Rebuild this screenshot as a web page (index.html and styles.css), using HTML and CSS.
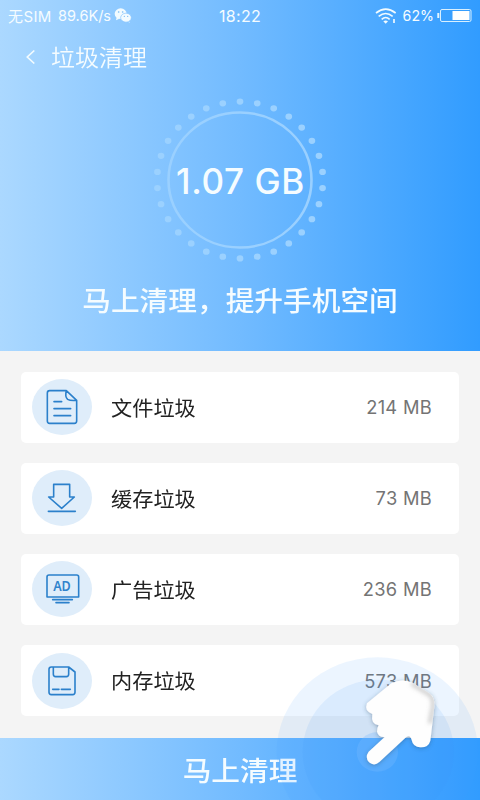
FILE: index.html
```html
<!DOCTYPE html>
<html lang="zh-CN">
<head>
<meta charset="utf-8">
<title>垃圾清理</title>
<link rel="stylesheet" href="styles.css">
</head>
<body>
<main class="screen">
  <section class="hero">
    <div class="status">
      <div class="status-left">
        <span class="carrier">无SIM</span><span class="speed">89.6K/s</span>
        <svg class="wechat" width="18" height="16" viewBox="0 0 54 48"><g fill="#f2fbff"><ellipse cx="20" cy="17" rx="18" ry="16"/><path d="M8 28l-2 9 10-5zM43 37l5 7-10-4z"/><ellipse cx="36" cy="29" rx="16" ry="13.5" stroke="#83c3ff" stroke-width="2"/></g><g fill="#76b9f5"><circle cx="14" cy="12" r="2.5"/><circle cx="26" cy="12" r="2.5"/><circle cx="31" cy="25" r="2"/><circle cx="41" cy="25" r="2"/></g></svg>
      </div>
      <span class="clock">18:22</span>
      <div class="status-right">
        <svg width="22" height="16" viewBox="0 0 66 48" fill="none" stroke="#f2fbff" stroke-width="4.8"><path d="M3 15Q32-8 62 15M11 25Q32 8 53 25M20 34Q32 23 44 34"/><path d="M25 40q7-5 14 0l-7 7z" fill="#f2fbff" stroke="none"/><path d="M57 33v12" stroke-width="5"/></svg>
        <span class="percent">62%</span>
        <svg class="battery" width="35" height="15" viewBox="0 0 35 15"><rect x="3.5" y="1.5" width="30.5" height="12" rx="1.5" fill="none" stroke="#d9f0ff"/><rect x="15.5" y="3" width="17" height="9" fill="#fff"/><path d="M1.3 5v5" stroke="#e4f5ff" stroke-width="2"/></svg>
      </div>
    </div>
    <header class="nav">
      <svg class="back" width="12" height="16" viewBox="0 0 12 16"><path d="M9.3 1.5 2.3 8l7 6.5" fill="none" stroke="#f2fbff" stroke-width="1.7"/></svg>
      <h1 class="title">垃圾清理</h1>
    </header>
    <div class="gauge">
      <svg class="ring" viewBox="0 0 180 180" preserveAspectRatio="none"><circle cx="90" cy="90" r="71.5" fill="none" stroke="#9ad0ff" stroke-width="2.6"/><circle cx="90" cy="90" r="83" fill="none" stroke="#9bd1ff" stroke-width="6.7" stroke-linecap="round" pathLength="30" stroke-dasharray="0 1" transform="rotate(-90 90 90)"/></svg>
      <span class="total">1.07 GB</span>
    </div>
    <p class="headline">马上清理，提升手机空间</p>
  </section>
  <section class="list">
    <article class="card">
      <span class="badge"><svg width="60" height="56" viewBox="0 0 180 168"><path d="M101 35H53q-7 0-7 7v84q0 7 7 7h74q7 0 7-7V64L103 35q-5 17 4 26 8 5 27 3M66 68h23M66 89h50M66 110h50"/></svg></span>
      <span class="name">文件垃圾</span><span class="size">214 MB</span>
    </article>
    <article class="card">
      <span class="badge"><svg width="60" height="56" viewBox="0 0 180 168"><path d="M65 43h48v38h14l-38 34-39-34h15zM49 124h81"/></svg></span>
      <span class="name">缓存垃圾</span><span class="size">73 MB</span>
    </article>
    <article class="card">
      <span class="badge"><svg width="60" height="56" viewBox="0 0 180 168"><path d="M45 108V48q0-6 6-6h83q6 0 6 6v60zM62 116h59M72 125h39"/><text x="90" y="89" text-anchor="middle" textLength="53" lengthAdjust="spacingAndGlyphs" class="ad">AD</text></svg></span>
      <span class="name">广告垃圾</span><span class="size">236 MB</span>
    </article>
    <article class="card">
      <span class="badge"><svg width="60" height="56" viewBox="0 0 180 168"><path d="M51 49q0-7 7-7h52l19 15v61q0 7-7 7H58q-7 0-7-7zM64 43v21q0 7 7 7h32q7 0 7-7V43M62 109h19M88 109h27"/></svg></span>
      <span class="name">内存垃圾</span><span class="size">573 MB</span>
    </article>
  </section>
  <footer class="action"><span class="action-text">马上清理</span></footer>
  <svg class="touch" width="210" height="160" viewBox="0 0 630 480">
    <defs>
      <filter id="shade" x="-20%" y="-20%" width="140%" height="140%"><feDropShadow dx="0" dy="3" stdDeviation="6" flood-color="#334c68" flood-opacity="0.42"/></filter>
      <filter id="soft" x="-50%" y="-20%" width="200%" height="140%"><feGaussianBlur stdDeviation="7"/></filter>
      <clipPath id="palm"><path d="M291 190L364 130Q393 114 426 127L478 160Q495 172 493 200L481 302Q475 323 451 322Q429 321 425 300Q421 283 409 291L328 366Q313 380 297 367Q284 352 296 335L344 291Q326 293 321 275Q321 264 326 256Q302 253 307 222Q282 213 291 190Z"/></clipPath>
    </defs>
    <ellipse cx="322" cy="336" rx="302" ry="284" fill="#429cff" fill-opacity="0.1"/>
    <ellipse cx="325" cy="336" rx="227" ry="217" fill="#3a96f5" fill-opacity="0.1"/>
    <ellipse cx="322" cy="336" rx="62" ry="59" fill="#7abaff" fill-opacity="0.32"/>
    <path filter="url(#shade)" fill="#fefefe" d="M291 190L364 130Q393 114 426 127L478 160Q495 172 493 200L481 302Q475 323 451 322Q429 321 425 300Q421 283 409 291L328 366Q313 380 297 367Q284 352 296 335L344 291Q326 293 321 275Q321 264 326 256Q302 253 307 222Q282 213 291 190Z"/>
    <g clip-path="url(#palm)"><path d="M424 130L482 166Q492 178 489 202L480 250" fill="none" stroke="#999" stroke-opacity="0.5" stroke-width="12" filter="url(#soft)"/></g>
  </svg>
</main>
</body>
</html>
```
FILE: styles.css
```css
* { box-sizing: border-box; }
body { margin: 0; font-family: Inter, "Noto Sans CJK SC", sans-serif; }
.screen { position: relative; width: 480px; height: 800px; overflow: hidden; background: #f4f4f4; display: flex; flex-direction: column; }
.hero, .action { background: linear-gradient(90deg, #abd8ff 0%, #72bbff 50%, #319cff 100%); color: #f5fcff; }
.hero { height: 351px; flex: none; display: flex; flex-direction: column; align-items: center; }
.status { width: 100%; height: 31px; padding: 0 8px; display: grid; grid-template-columns: 1fr auto 1fr; align-items: center; font-size: 14.5px; white-space: nowrap; }
.status-left, .status-right { display: flex; align-items: center; }
.status-right { justify-content: flex-end; }
.carrier { width: 50px; font-size: 15px; letter-spacing: 0.4px; }
.speed { width: 56px; }
.clock { font-size: 16px; letter-spacing: 0.3px; }
.percent { margin: 0 3px 0 6px; font-size: 14.2px; }
.nav { width: 100%; height: 51px; display: flex; align-items: center; padding-left: 25px; }
.title { margin: 3px 0 0 14px; font-size: 24px; line-height: 36px; font-weight: 350; transform: scaleY(0.94); }
.gauge { width: 180px; height: 170px; margin: 13px 1px 0 0; display: grid; place-items: center; }
.ring, .total { grid-area: 1 / 1; }
.ring { width: 180px; height: 170px; }
.total { margin: 1px 0 0 2px; font-size: 35px; font-weight: 450; letter-spacing: 0.6px; white-space: nowrap; }
.headline { margin: 16px 0 0; font-size: 28.7px; line-height: 42px; font-weight: 500; transform: scaleY(0.94); white-space: nowrap; }
.list { height: 387px; padding: 20.5px 21px 0; display: flex; flex-direction: column; gap: 20.2px; }
.card { height: 71px; flex: none; background: #fff; border-radius: 5px; display: flex; align-items: center; padding: 0 27px 0 11px; }
.badge { width: 60px; height: 56px; background: #dfedfa; border-radius: 50%; }
.badge svg { display: block; fill: none; stroke: #2b80cb; stroke-width: 4.8; stroke-linejoin: round; stroke-linecap: round; }
.badge .ad { font: 600 42px "Noto Sans", sans-serif; fill: #3183cc; stroke: none; }
.name { margin: 1px 0 0 19px; font-size: 21.2px; line-height: 30px; color: #222; transform: scaleY(0.94); }
.size { margin-left: auto; font-size: 18.3px; letter-spacing: 0.3px; color: #747474; }
.action { height: 62px; flex: none; display: flex; justify-content: center; align-items: center; }
.action-text { margin-top: 5px; font-size: 28.7px; line-height: 42px; font-weight: 500; transform: scaleY(0.94); }
.touch { position: absolute; right: 0; bottom: 0; }
```
